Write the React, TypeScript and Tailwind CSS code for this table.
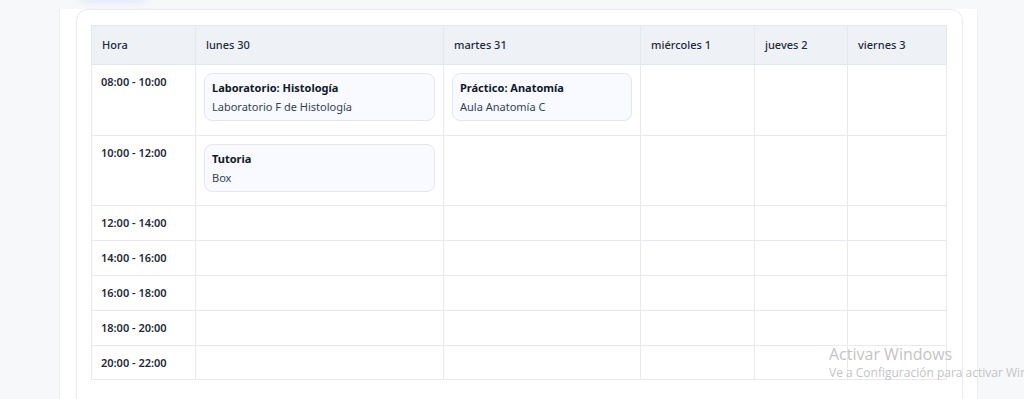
import React from 'react';

interface Slot {
  title: string;
  place: string;
}

const DAYS = ['lunes 30', 'martes 31', 'miércoles 1', 'jueves 2', 'viernes 3'];
const COL_WIDTHS = ['w-[104px]', 'w-[248px]', 'w-[197px]', 'w-[114px]', 'w-[93px]', 'w-[99px]'];

const ROWS: { hour: string; h: string; slots: (Slot | null)[] }[] = [
  {
    hour: '08:00 - 10:00',
    h: 'h-[71px]',
    slots: [
      { title: 'Laboratorio: Histología', place: 'Laboratorio F de Histología' },
      { title: 'Práctico: Anatomía', place: 'Aula Anatomía C' },
      null,
      null,
      null,
    ],
  },
  { hour: '10:00 - 12:00', h: 'h-[70px]', slots: [{ title: 'Tutoria', place: 'Box' }, null, null, null, null] },
  { hour: '12:00 - 14:00', h: 'h-[35px]', slots: [null, null, null, null, null] },
  { hour: '14:00 - 16:00', h: 'h-[35px]', slots: [null, null, null, null, null] },
  { hour: '16:00 - 18:00', h: 'h-[35px]', slots: [null, null, null, null, null] },
  { hour: '18:00 - 20:00', h: 'h-[35px]', slots: [null, null, null, null, null] },
  { hour: '20:00 - 22:00', h: 'h-[34px]', slots: [null, null, null, null, null] },
];

const EventCard: React.FC<{ slot: Slot }> = ({ slot }) => (
  <div className="mb-[5px] rounded-lg border border-[#e3e8f0] bg-[#f8faff] px-[7px] pt-[6px] pb-[5px]">
    <div className="text-[11px] font-bold leading-[15px] text-[#111827]">{slot.title}</div>
    <div className="mt-[3px] text-[11px] leading-[17px] text-[#374151]">{slot.place}</div>
  </div>
);

export default function App() {
  return (
    <div className="relative h-[399px] w-full overflow-hidden bg-[#f7f8fa] font-['Noto_Sans','Open_Sans',sans-serif]">
      <div className="ml-[59px] h-full w-[919px] border-x border-[#eceef2] bg-white pl-[16px]">
        {/* leftover button glow from above */}
        <div className="absolute left-[78px] top-[-14px] h-[16px] w-[70px] rounded-full bg-[#dfe7fb] blur-[4px]"></div>

        <div className="mt-[9px] h-[420px] w-[887px] rounded-xl border border-[#e8ebf0] bg-white px-[14px] pt-[15px] shadow-[0_1px_3px_rgba(0,0,0,0.04)]">
          <table className="w-[855px] table-fixed border-collapse">
            <thead>
              <tr className="h-[39px] bg-[#eef2f7]">
                <th className={`${COL_WIDTHS[0]} border border-[#e3e7ee] px-[10px] text-left text-[11px] font-medium text-[#1f2937]`}>
                  Hora
                </th>
                {DAYS.map((d, i) => (
                  <th
                    key={d}
                    className={`${COL_WIDTHS[i + 1]} border border-[#e3e7ee] px-[10px] text-left text-[11px] font-medium text-[#1f2937]`}
                  >
                    {d}
                  </th>
                ))}
              </tr>
            </thead>
            <tbody>
              {ROWS.map(row => (
                <tr key={row.hour} className={row.h}>
                  <td className="border border-[#e6e9f0] px-[9px] py-[8px] align-top text-[11px] font-semibold leading-[17px] text-[#1f2937]">
                    {row.hour}
                  </td>
                  {row.slots.map((slot, i) => (
                    <td key={i} className="border border-[#e6e9f0] px-[8px] pt-[8px] pb-[8px] align-top">
                      {slot && <EventCard slot={slot} />}
                    </td>
                  ))}
                </tr>
              ))}
            </tbody>
          </table>
        </div>
      </div>

      {/* Windows activation watermark */}
      <div className="pointer-events-none absolute left-[829px] top-[343px] whitespace-nowrap font-['Open_Sans',sans-serif] text-[#c4c4c4]">
        <div className="text-[16px] leading-[22px]">Activar Windows</div>
        <div className="text-[12px] leading-[16px]">Ve a Configuración para activar Windows.</div>
      </div>
    </div>
  );
}
